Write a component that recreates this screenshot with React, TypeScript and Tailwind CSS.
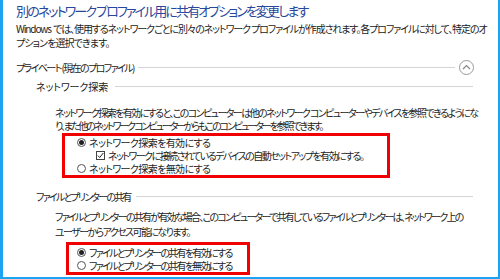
const jp = "font-['Noto_Sans_CJK_JP','Noto_Sans',sans-serif] [font-feature-settings:'palt']";

const Radio = ({ checked }: { checked?: boolean }) => (
  <span className="w-[9px] h-[9px] rounded-full border border-[#555] bg-white flex items-center justify-center shrink-0">
    {checked && <span className="w-[5px] h-[5px] rounded-full bg-[#222]" />}
  </span>
);

const Check = () => (
  <span className="w-[9px] h-[9px] border border-[#444] bg-white flex items-center justify-center shrink-0">
    <svg width="7" height="7" viewBox="0 0 7 7">
      <path d="M0.8 3.6 L2.7 5.5 L6.3 1" fill="none" stroke="#222" strokeWidth="1" />
    </svg>
  </span>
);

export default function App() {
  return (
    <div className={`w-[500px] h-[279px] bg-white border-l-[3px] border-r-2 border-b-2 border-[#1ea2f2] overflow-hidden text-[#222] ${jp}`}>
      <div className="pl-[13px]">
        <div className="h-[22px] flex items-center text-[13px] text-[#26479c] tracking-[-1.9px] whitespace-nowrap">
          別のネットワーク プロファイル用に共有オプションを変更します
        </div>
        <p className="text-[10px] leading-[14px] whitespace-nowrap">
          <span className="block tracking-[-1.1px]">
            Windows&nbsp; では、使用するネットワークごとに別々のネットワーク プロファイルが作成されます。各プロファイルに対して、特定のオ
          </span>
          <span className="block tracking-[-0.9px]">プションを選択できます。</span>
        </p>

        <div className="mt-[10px] flex items-center h-[14px]">
          <span className="whitespace-nowrap text-[10px] tracking-[-1.6px]">プライベート (現在のプロファイル)</span>
          <span className="ml-[4px] h-px bg-[#d4d4d4] flex-1" />
          <span className="ml-[4px] mr-[24px] w-[15px] h-[15px] rounded-full border border-[#9a9a9a] flex items-center justify-center">
            <svg width="9" height="6" viewBox="0 0 9 6">
              <path d="M1 5 L4.5 1.5 L8 5" fill="none" stroke="#888" strokeWidth="1.2" />
            </svg>
          </span>
        </div>

        <div className="mt-[5px] pl-[20px] flex items-center h-[14px]">
          <span className="whitespace-nowrap text-[10px] tracking-[-0.1px]">ネットワーク探索</span>
          <span className="ml-[7px] mr-[25px] h-px bg-[#d4d4d4] flex-1" />
        </div>

        <p className="mt-[13px] pl-[39px] text-[10px] leading-[13px] whitespace-nowrap">
          <span className="block tracking-[-1.6px]">
            ネットワーク探索を有効にすると、このコンピューターは他のネットワーク コンピューターやデバイスを参照できるようにな
          </span>
          <span className="block tracking-[-2.1px]">
            り、また他のネットワーク コンピューターからもこのコンピューターを参照できます。
          </span>
        </p>

        <div className="ml-[46px] mt-[1px] w-[328px] border-[3px] border-[#f00000] text-[10px] leading-[13px]">
          <div className="h-[13px] flex items-center pl-[12px] gap-[3px] whitespace-nowrap">
            <Radio checked />
            <span className="tracking-[-0.6px]">ネットワーク探索を有効にする</span>
          </div>
          <div className="h-[13px] flex items-center pl-[31px] gap-[3px] whitespace-nowrap">
            <Check />
            <span className="tracking-[-1.55px]">ネットワークに接続されているデバイスの自動セットアップを有効にする。</span>
          </div>
          <div className="h-[13px] flex items-center pl-[12px] gap-[3px] whitespace-nowrap">
            <Radio />
            <span className="tracking-[-0.6px]">ネットワーク探索を無効にする</span>
          </div>
        </div>

        <div className="mt-[11px] pl-[20px] flex items-center h-[14px]">
          <span className="whitespace-nowrap text-[10px] tracking-[-1.8px]">ファイルとプリンターの共有</span>
          <span className="ml-[5px] mr-[25px] h-px bg-[#d4d4d4] flex-1" />
        </div>

        <p className="mt-[6px] pl-[39px] text-[10px] leading-[15px] whitespace-nowrap">
          <span className="block tracking-[-1.75px]">
            ファイルとプリンターの共有が有効な場合、このコンピューターで共有しているファイルとプリンターは、ネットワーク上の
          </span>
          <span className="block tracking-[-1.6px]">ユーザーからアクセス可能になります。</span>
        </p>

        <div className="ml-[50px] mt-[3px] w-[184px] border-[3px] border-[#f00000] text-[10px] leading-[13px]">
          <div className="h-[14px] flex items-center pl-[8px] gap-[3px] whitespace-nowrap">
            <Radio checked />
            <span className="tracking-[-1.7px]">ファイルとプリンターの共有を有効にする</span>
          </div>
          <div className="h-[13px] flex items-center pl-[8px] gap-[3px] whitespace-nowrap">
            <Radio />
            <span className="tracking-[-1.7px]">ファイルとプリンターの共有を無効にする</span>
          </div>
        </div>
      </div>
    </div>
  );
}
